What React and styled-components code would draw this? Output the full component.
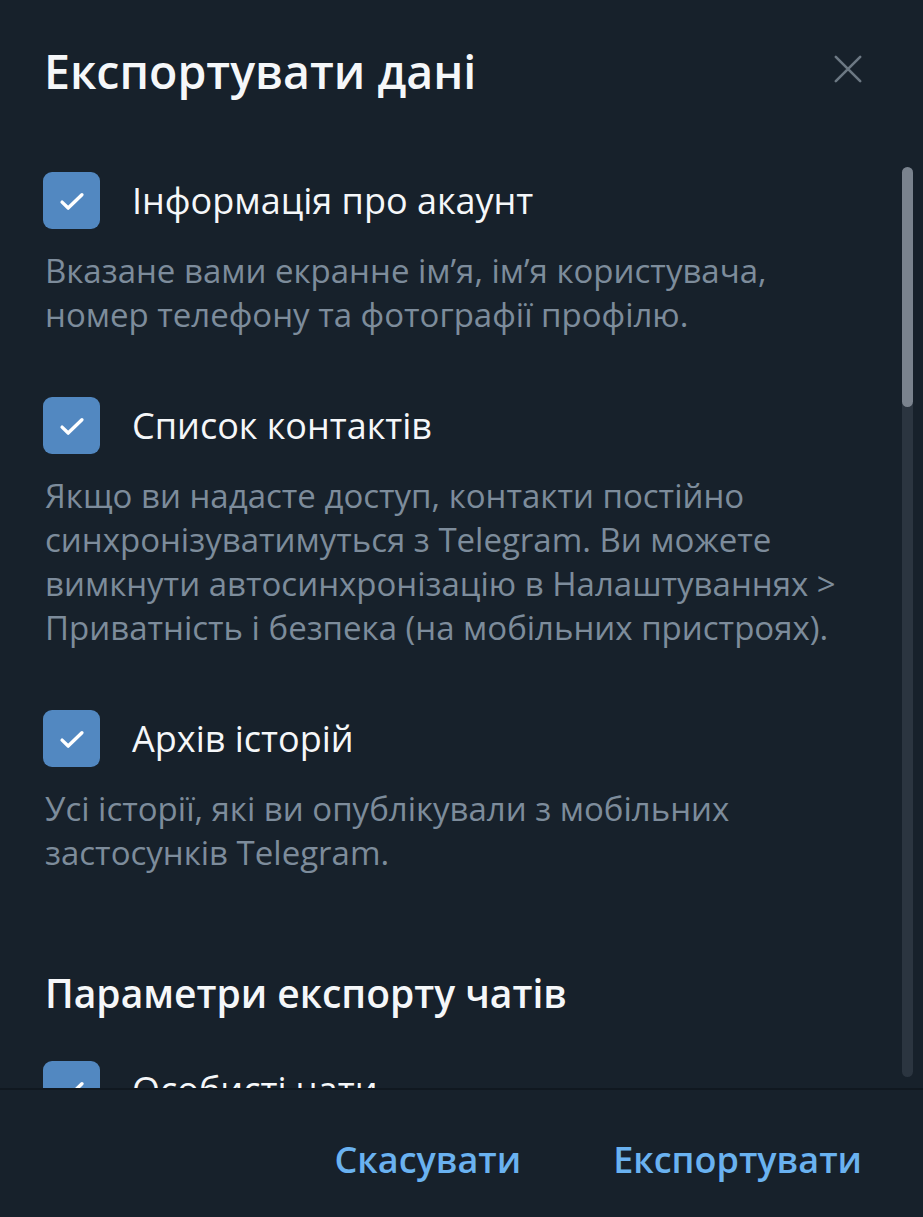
import React from "react";
import styled, { createGlobalStyle } from "styled-components";

const Global = createGlobalStyle`
  html, body { margin: 0; padding: 0; background: #17212b; }
  body { font-family: "Open Sans", "Noto Sans", sans-serif; -webkit-font-smoothing: antialiased; }
  * { box-sizing: border-box; }
`;

const Dialog = styled.div`
  width: 923px;
  height: 1217px;
  background: #17212b;
  display: flex;
  flex-direction: column;
  overflow: hidden;
`;

const Header = styled.div`
  height: 140px;
  flex: none;
  display: flex;
  align-items: center;
  justify-content: space-between;
  padding: 0 55px 0 44px;
`;

const Title = styled.h1`
  margin: 0;
  font-size: 46.5px;
  font-weight: 600;
  color: #f5f7f9;
  line-height: 1;
  margin-top: 2px;
`;

const CloseButton = styled.button`
  width: 40px;
  height: 40px;
  border: none;
  background: transparent;
  padding: 0;
  display: flex;
  align-items: center;
  justify-content: center;
  margin-top: -2px;
  cursor: pointer;
`;

const ScrollArea = styled.div`
  flex: 1;
  position: relative;
  overflow: hidden;
`;

const Content = styled.div`
  padding: 32px 40px 0 43px;
`;

const Option = styled.div`
  margin-bottom: ${(p) => p.$gap}px;
`;

const CheckRow = styled.label`
  display: flex;
  align-items: center;
  gap: 32px;
  height: 57px;
`;

const Box = styled.span`
  width: 57px;
  height: 57px;
  border-radius: 9px;
  background: #5288c1;
  display: flex;
  align-items: center;
  justify-content: center;
  flex: none;
`;

const Label = styled.span`
  font-size: 36px;
  color: #f5f7f9;
  line-height: 57px;
`;

const Desc = styled.p`
  margin: 20px 0 0 2px;
  font-size: 33px;
  line-height: 44px;
  color: #7d8c9b;
  max-width: 820px;
`;

const Section = styled.h2`
  margin: 0 0 44px 2px;
  font-size: 39px;
  font-weight: 600;
  color: #f5f7f9;
  line-height: 48px;
`;

const ScrollTrack = styled.div`
  position: absolute;
  top: 27px;
  bottom: 11px;
  right: 10px;
  width: 11px;
  border-radius: 6px;
  background: #2b3540;
`;

const ScrollThumb = styled.div`
  height: 240px;
  border-radius: 6px;
  background: #7a838e;
`;

const Footer = styled.div`
  height: 129px;
  flex: none;
  border-top: 2px solid #101820;
  display: flex;
  align-items: center;
  justify-content: flex-end;
  gap: 92px;
  padding: 12px 61px 0 0;
`;

const FooterButton = styled.button`
  border: none;
  background: transparent;
  padding: 0;
  font-family: inherit;
  font-size: 36px;
  font-weight: 600;
  color: #6ab2f0;
  cursor: pointer;
`;

const Check = () => (
  <svg width="34" height="34" viewBox="0 0 24 24" fill="none">
    <path d="M5 12.8l4.3 4.2L19 7.6" stroke="#fff" strokeWidth="2.4" strokeLinecap="round" strokeLinejoin="round" />
  </svg>
);

const CloseIcon = () => (
  <svg width="30" height="30" viewBox="0 0 32 32">
    <path d="M3 3L29 29M29 3L3 29" stroke="#6c7883" strokeWidth="2.8" strokeLinecap="round" />
  </svg>
);

const options = [
  {
    label: "Інформація про акаунт",
    desc: "Вказане вами екранне ім’я, ім’я користувача, номер телефону та фотографії профілю.",
  },
  {
    label: "Список контактів",
    desc: "Якщо ви надасте доступ, контакти постійно синхронізуватимуться з Telegram. Ви можете вимкнути автосинхронізацію в Налаштуваннях > Приватність і безпека (на мобільних пристроях).",
  },
  {
    label: "Архів історій",
    desc: "Усі історії, які ви опублікували з мобільних застосунків Telegram.",
  },
];

export default function App() {
  return (
    <>
      <Global />
      <Dialog>
        <Header>
          <Title>Експортувати дані</Title>
          <CloseButton aria-label="Закрити">
            <CloseIcon />
          </CloseButton>
        </Header>
        <ScrollArea>
          <Content>
            {options.map((o, i) => (
              <Option key={o.label} $gap={i === options.length - 1 ? 94 : 60}>
                <CheckRow>
                  <Box>
                    <Check />
                  </Box>
                  <Label>{o.label}</Label>
                </CheckRow>
                <Desc>{o.desc}</Desc>
              </Option>
            ))}
            <Section>Параметри експорту чатів</Section>
            <Option $gap={0}>
              <CheckRow>
                <Box>
                  <Check />
                </Box>
                <Label>Особисті чати</Label>
              </CheckRow>
            </Option>
          </Content>
          <ScrollTrack>
            <ScrollThumb />
          </ScrollTrack>
        </ScrollArea>
        <Footer>
          <FooterButton>Скасувати</FooterButton>
          <FooterButton>Експортувати</FooterButton>
        </Footer>
      </Dialog>
    </>
  );
}
